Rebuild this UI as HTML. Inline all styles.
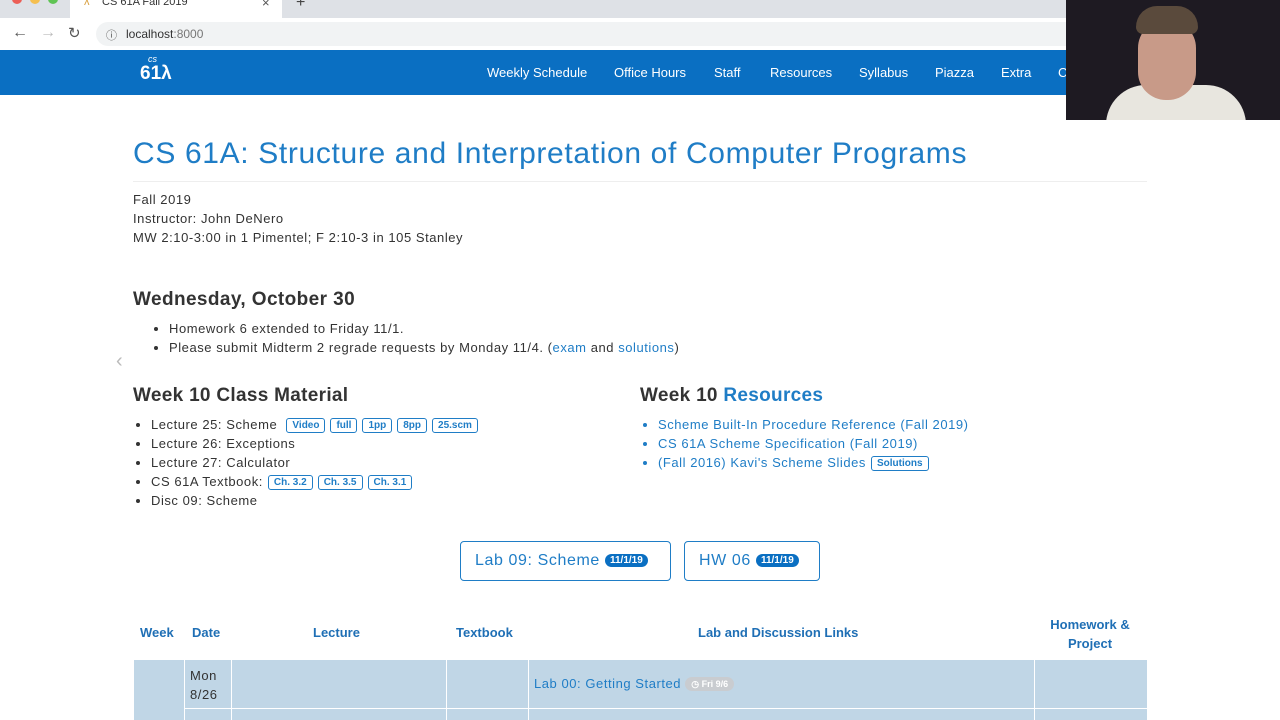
<!DOCTYPE html>
<html><head><meta charset="utf-8"><style>
*{box-sizing:border-box;margin:0;padding:0}
body{width:1280px;height:720px;overflow:hidden;background:#fff;font-family:"Liberation Sans",sans-serif;color:#333;position:relative}
.tabbar{position:absolute;left:0;top:0;width:1280px;height:18px;background:#dee1e6}
.tab{position:absolute;left:70px;top:0;width:212px;height:18px;background:#fff}
.addr{position:absolute;left:0;top:18px;width:1280px;height:32px;background:#fff}
.omni{position:absolute;left:96px;top:4px;width:1000px;height:24px;background:#f1f3f4;border-radius:12px}
.nav{position:absolute;left:0;top:50px;width:1280px;height:45px;background:#0a6fc2}
.nav a{position:absolute;top:15px;color:#fff;font-size:13px}
a,.lnk{color:#1f7dc6;text-decoration:none}
.tag{display:inline-block;border:1px solid #1f7dc6;border-radius:3px;color:#1f7dc6;font-size:10px;font-weight:bold;padding:1px 5px;line-height:11px;margin-left:5px;vertical-align:1px;letter-spacing:0}
ul{list-style:disc;padding-left:36px;font-size:13px;line-height:19px;letter-spacing:0.55px}
.abs{position:absolute}
.sp{letter-spacing:0.55px}
</style></head><body>
<div class="tabbar">
<div class="abs" style="left:12px;top:-6px;width:10px;height:10px;border-radius:50%;background:#ec5f57"></div>
<div class="abs" style="left:30px;top:-6px;width:10px;height:10px;border-radius:50%;background:#f5bf4f"></div>
<div class="abs" style="left:48px;top:-6px;width:10px;height:10px;border-radius:50%;background:#5fc454"></div>
<div class="tab"><span class="abs" style="left:14px;top:-4px;font-size:11px;color:#d9a040">λ</span><span class="abs" style="left:32px;top:-4px;font-size:11px;color:#333">CS 61A Fall 2019</span><span class="abs" style="left:192px;top:-5px;font-size:13px;color:#555">×</span></div>
<span class="abs" style="left:296px;top:-6px;font-size:16px;color:#444">+</span>
</div>
<div class="addr">
<span class="abs" style="left:12px;top:6px;font-size:16px;color:#555">←</span>
<span class="abs" style="left:40px;top:6px;font-size:16px;color:#bbb">→</span>
<span class="abs" style="left:68px;top:6px;font-size:15px;color:#555">↻</span>
<div class="omni"><span class="abs" style="left:10px;top:5px;font-size:11px;color:#555">ⓘ</span><span class="abs" style="left:30px;top:5px;font-size:12px;color:#333">localhost<span style="color:#777">:8000</span></span></div>
</div>
<div class="nav">
<span class="abs" style="left:140px;top:13px;color:#fff;font-size:19px;font-weight:bold">61λ</span>
<span class="abs" style="left:148px;top:4px;color:#fff;font-size:9px;font-style:italic">cs</span>
<a style="left:487px">Weekly Schedule</a><a style="left:614px">Office Hours</a><a style="left:714px">Staff</a><a style="left:770px">Resources</a><a style="left:859px">Syllabus</a><a style="left:935px">Piazza</a><a style="left:1001px">Extra</a><a style="left:1058px">C</a>
</div>
<div class="abs" style="left:1066px;top:0;width:214px;height:120px;background:#1e1a22;overflow:hidden">
<div class="abs" style="left:40px;top:85px;width:140px;height:40px;background:#e8e6df;border-radius:40px 40px 0 0"></div>
<div class="abs" style="left:72px;top:20px;width:58px;height:80px;background:#c89a88;border-radius:28px"></div>
<div class="abs" style="left:70px;top:6px;width:62px;height:28px;background:#5a4a3c;border-radius:30px 30px 10px 10px"></div>
</div>
<div class="abs" style="left:133px;top:137px;font-size:30px;color:#1f7dc6;letter-spacing:0.65px">CS 61A: Structure and Interpretation of Computer Programs</div>
<div class="abs" style="left:133px;top:181px;width:1014px;border-top:1px solid #eee"></div>
<div class="abs sp" style="left:133px;top:190px;font-size:13px;line-height:19px">Fall 2019<br>Instructor: John DeNero<br>MW 2:10-3:00 in 1 Pimentel; F 2:10-3 in 105 Stanley</div>
<div class="abs" style="left:133px;top:289px;font-size:19px;font-weight:bold;letter-spacing:0.4px">Wednesday, October 30</div>
<ul class="abs" style="left:133px;top:319px"><li>Homework 6 extended to Friday 11/1.</li><li>Please submit Midterm 2 regrade requests by Monday 11/4. (<a>exam</a> and <a>solutions</a>)</li></ul>
<span class="abs" style="left:116px;top:350px;font-size:20px;color:#bbb">‹</span>
<div class="abs" style="left:133px;top:385px;font-size:19px;font-weight:bold;letter-spacing:0.3px">Week 10 Class Material</div>
<ul class="abs" style="left:115px;top:415px"><li>Lecture 25: Scheme <span class="tag">Video</span><span class="tag">full</span><span class="tag">1pp</span><span class="tag">8pp</span><span class="tag">25.scm</span></li><li>Lecture 26: Exceptions</li><li>Lecture 27: Calculator</li><li>CS 61A Textbook:<span class="tag">Ch. 3.2</span><span class="tag">Ch. 3.5</span><span class="tag">Ch. 3.1</span></li><li>Disc 09: Scheme</li></ul>
<div class="abs" style="left:640px;top:385px;font-size:19px;font-weight:bold;letter-spacing:0.3px">Week 10 <span style="color:#1f7dc6">Resources</span></div>
<ul class="abs" style="left:622px;top:415px;color:#1f7dc6"><li>Scheme Built-In Procedure Reference (Fall 2019)</li><li>CS 61A Scheme Specification (Fall 2019)</li><li>(Fall 2016) Kavi's Scheme Slides<span class="tag">Solutions</span></li></ul>
<div class="abs" style="left:460px;top:541px;width:211px;height:40px;border:1px solid #1f7dc6;border-radius:4px;color:#1f7dc6;font-size:16px;padding:10px 14px;letter-spacing:0.6px">Lab 09: Scheme <span style="background:#0a6fc2;color:#fff;font-size:10px;font-weight:bold;border-radius:8px;padding:1px 5px;vertical-align:2px;letter-spacing:0">11/1/19</span></div>
<div class="abs" style="left:684px;top:541px;width:136px;height:40px;border:1px solid #1f7dc6;border-radius:4px;color:#1f7dc6;font-size:16px;padding:10px 14px;letter-spacing:0.6px">HW 06 <span style="background:#0a6fc2;color:#fff;font-size:10px;font-weight:bold;border-radius:8px;padding:1px 5px;vertical-align:2px;letter-spacing:0">11/1/19</span></div>
<div class="abs" style="left:140px;top:625px;font-size:13px;font-weight:bold;color:#1f6fb5">Week</div>
<div class="abs" style="left:192px;top:625px;font-size:13px;font-weight:bold;color:#1f6fb5">Date</div>
<div class="abs" style="left:313px;top:625px;font-size:13px;font-weight:bold;color:#1f6fb5">Lecture</div>
<div class="abs" style="left:456px;top:625px;font-size:13px;font-weight:bold;color:#1f6fb5">Textbook</div>
<div class="abs" style="left:698px;top:625px;font-size:13px;font-weight:bold;color:#1f6fb5">Lab and Discussion Links</div>
<div class="abs" style="left:1040px;top:615px;width:100px;text-align:center;font-size:13px;font-weight:bold;color:#1f6fb5;line-height:19px">Homework &amp; Project</div>
<div class="abs" style="left:134px;top:660px;width:1013px;height:60px;background:#c0d6e6"></div>
<div class="abs" style="left:184px;top:660px;width:1px;height:60px;background:#fff"></div>
<div class="abs" style="left:231px;top:660px;width:1px;height:60px;background:#fff"></div>
<div class="abs" style="left:446px;top:660px;width:1px;height:60px;background:#fff"></div>
<div class="abs" style="left:528px;top:660px;width:1px;height:60px;background:#fff"></div>
<div class="abs" style="left:1034px;top:660px;width:1px;height:60px;background:#fff"></div>
<div class="abs" style="left:184px;top:708px;width:963px;height:1px;background:#fff"></div>
<div class="abs sp" style="left:190px;top:666px;font-size:13px;line-height:19px">Mon<br>8/26</div>
<div class="abs sp" style="left:534px;top:676px;font-size:13px;color:#1f7dc6">Lab 00: Getting Started <span style="color:#fff;background:#c9ccd0;font-size:9px;font-weight:bold;border-radius:8px;padding:2px 6px;vertical-align:1px;letter-spacing:0">◷ Fri 9/6</span></div>
</body></html>
